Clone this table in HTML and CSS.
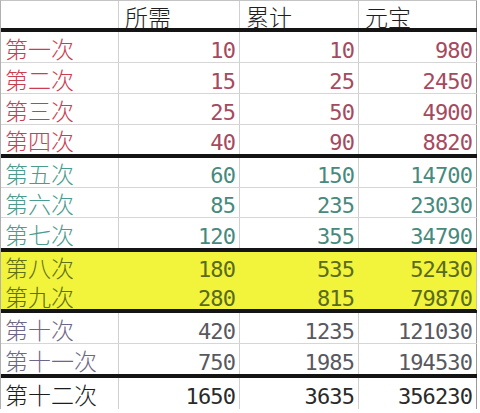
FILE: index.html
```html
<!DOCTYPE html>
<html lang="zh">
<head>
<meta charset="utf-8">
<title>元宝</title>
<link rel="stylesheet" href="styles.css">
</head>
<body>
<div class="sheet">
  <div class="row hdr">
    <div class="c"></div>
    <div class="c">所需</div>
    <div class="c">累计</div>
    <div class="c">元宝</div>
  </div>
  <div class="grp g1">
    <div class="row"><div class="c lbl">第一次</div><div class="c num">10</div><div class="c num">10</div><div class="c num">980</div></div>
    <div class="row"><div class="c lbl">第二次</div><div class="c num">15</div><div class="c num">25</div><div class="c num">2450</div></div>
    <div class="row"><div class="c lbl">第三次</div><div class="c num">25</div><div class="c num">50</div><div class="c num">4900</div></div>
    <div class="row"><div class="c lbl">第四次</div><div class="c num">40</div><div class="c num">90</div><div class="c num">8820</div></div>
  </div>
  <div class="grp g2">
    <div class="row"><div class="c lbl">第五次</div><div class="c num">60</div><div class="c num">150</div><div class="c num">14700</div></div>
    <div class="row"><div class="c lbl">第六次</div><div class="c num">85</div><div class="c num">235</div><div class="c num">23030</div></div>
    <div class="row"><div class="c lbl">第七次</div><div class="c num">120</div><div class="c num">355</div><div class="c num">34790</div></div>
  </div>
  <div class="grp g3">
    <div class="row"><div class="c lbl">第八次</div><div class="c num">180</div><div class="c num">535</div><div class="c num">52430</div></div>
    <div class="row"><div class="c lbl">第九次</div><div class="c num">280</div><div class="c num">815</div><div class="c num">79870</div></div>
  </div>
  <div class="grp g4">
    <div class="row"><div class="c lbl">第十次</div><div class="c num">420</div><div class="c num">1235</div><div class="c num">121030</div></div>
    <div class="row"><div class="c lbl">第十一次</div><div class="c num">750</div><div class="c num">1985</div><div class="c num">194530</div></div>
  </div>
  <div class="grp g5">
    <div class="row"><div class="c lbl">第十二次</div><div class="c num">1650</div><div class="c num">3635</div><div class="c num">356230</div></div>
  </div>
</div>
</body>
</html>
```

FILE: styles.css
```css
html, body {
  margin: 0;
  background: #ffffff;
}

.sheet {
  width: 476px;
  border-top: 1px solid #c4c4c4;
  border-left: 1px solid #b0b0b0;
  font-family: "Noto Sans CJK SC", "Noto Sans", sans-serif;
  color: #222;
}

.row {
  display: grid;
  grid-template-columns: 118px 121px 119px 118px;
  box-sizing: border-box;
  height: 30px;
  border-bottom: 1px solid #d6d6d6;
}

.grp {
  border-bottom: 4px solid #141414;
}

.grp:last-child {
  border-bottom: none;
}

.grp .row:last-child {
  border-bottom: none;
}

.c {
  box-sizing: border-box;
  border-right: 1px solid #d0d0d0;
  padding: 0 5px;
  display: flex;
  align-items: center;
  white-space: nowrap;
}

.c:last-child {
  border-right-color: #9a9a9a;
}

.hdr {
  height: 31px;
  border-bottom: 4px solid #141414;
}

.hdr .c {
  align-items: flex-end;
  font-size: 23px;
  font-weight: 300;
  line-height: 24px;
  padding-left: 6px;
  color: #1e1e1e;
}

.lbl {
  font-size: 23px;
  font-weight: 300;
  line-height: 1;
  padding-left: 4px;
  padding-top: 2px;
}

.num {
  justify-content: flex-end;
  font-family: "DejaVu Sans Mono", "Liberation Mono", monospace;
  font-size: 22px;
  letter-spacing: -0.9px;
  line-height: 1;
  padding-right: 4px;
  padding-top: 7px;
}

/* group 1: red */
.g1 .row { height: 31px; }
.g1 .row:last-child { height: 29px; }
.g1 .lbl { color: #cc3c52; }
.g1 .num { color: #a54a5e; }

/* group 2: teal */
.g2 .row { height: 30px; }
.g2 .lbl { color: #4a9c8e; }
.g2 .num { color: #468a7d; }

/* group 3: yellow */
.g3 { background: #f1f43a; }
.g3 .row { height: 29px; border-bottom-color: transparent; }
.g3 .row:last-child { height: 28px; }
.g3 .c { border-right-color: transparent; }
.g3 .c:last-child { border-right-color: #c8c8a0; }
.g3 .lbl { color: #606e1e; }
.g3 .num { color: #5a6a20; }

/* group 4: grey purple */
.g4 .row { height: 31px; }
.g4 .row:last-child { height: 30px; }
.g4 .lbl { color: #6e6688; }
.g4 .num { color: #58585f; }

/* group 5: black */
.g5 .row { height: 31px; }
.g5 .lbl { color: #1c1c1c; }
.g5 .num { color: #2a2a2a; }
```
